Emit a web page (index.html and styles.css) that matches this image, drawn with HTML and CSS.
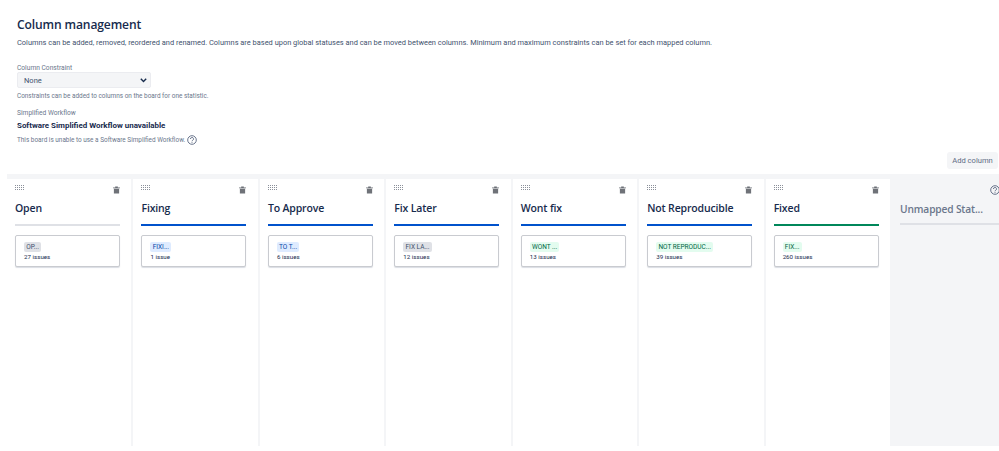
FILE: index.html
```html
<!DOCTYPE html>
<html lang="en">
<head>
<meta charset="utf-8">
<title>Column management</title>
<link rel="stylesheet" href="styles.css">
</head>
<body>
<svg class="defs" width="0" height="0" aria-hidden="true">
  <symbol id="grip" viewBox="0 0 10 6">
    <g fill="#8a8f99">
      <rect x="0" y="0" width="1" height="1"/><rect x="2" y="0" width="1" height="1"/><rect x="4" y="0" width="1" height="1"/><rect x="6" y="0" width="1" height="1"/><rect x="8" y="0" width="1" height="1"/>
      <rect x="0" y="2" width="1" height="1"/><rect x="2" y="2" width="1" height="1"/><rect x="4" y="2" width="1" height="1"/><rect x="6" y="2" width="1" height="1"/><rect x="8" y="2" width="1" height="1"/>
      <rect x="0" y="4" width="1" height="1"/><rect x="2" y="4" width="1" height="1"/><rect x="4" y="4" width="1" height="1"/><rect x="6" y="4" width="1" height="1"/><rect x="8" y="4" width="1" height="1"/>
    </g>
  </symbol>
  <symbol id="trash" viewBox="0 0 8 8">
    <path d="M2.500 0h3v1H8v1H0V1h2.500z" fill="#6b6f76"/>
    <path d="M1 2.500h6V8H1z" fill="#6f7278"/>
  </symbol>
  <symbol id="help" viewBox="0 0 10 10">
    <circle cx="5" cy="5" r="4.300" fill="none" stroke="#42526e" stroke-width=".8"/>
    <path d="M3.500 4a1.500 1.500 0 1 1 2.300 1.200c-.6.4-.8.600-.8 1.100" fill="none" stroke="#42526e" stroke-width=".8"/>
    <rect x="4.600" y="7" width=".8" height=".8" fill="#42526e"/>
  </symbol>
</svg>

<main class="page">
  <header class="intro">
    <h1 class="title">Column management</h1>
    <p class="desc">Columns can be added, removed, reordered and renamed. Columns are based upon global statuses and can be moved between columns. Minimum and maximum constraints can be set for each mapped column.</p>

    <label class="label" for="constraint">Column Constraint</label>
    <select class="select" id="constraint"><option>None</option></select>
    <p class="hint hint-one">Constraints can be added to columns on the board for one statistic.</p>

    <div class="label label-two">Simplified Workflow</div>
    <div class="strong">Software Simplified Workflow unavailable</div>
    <p class="hint hint-two">This board is unable to use a Software Simplified Workflow. <svg class="help"><use href="#help"/></svg></p>
  </header>

  <div class="actions"><button class="add" type="button">Add column</button></div>

  <section class="board">
    <article class="col">
      <div class="col-top"><svg class="grip"><use href="#grip"/></svg><svg class="trash"><use href="#trash"/></svg></div>
      <h2 class="col-name">Open</h2>
      <div class="rule rule-grey"></div>
      <div class="card"><span class="lozenge lz-grey">OP...</span><span class="count">27 issues</span></div>
    </article>
    <article class="col">
      <div class="col-top"><svg class="grip"><use href="#grip"/></svg><svg class="trash"><use href="#trash"/></svg></div>
      <h2 class="col-name">Fixing</h2>
      <div class="rule rule-blue"></div>
      <div class="card"><span class="lozenge lz-blue">FIXI...</span><span class="count">1 issue</span></div>
    </article>
    <article class="col">
      <div class="col-top"><svg class="grip"><use href="#grip"/></svg><svg class="trash"><use href="#trash"/></svg></div>
      <h2 class="col-name">To Approve</h2>
      <div class="rule rule-blue"></div>
      <div class="card"><span class="lozenge lz-blue">TO T...</span><span class="count">6 issues</span></div>
    </article>
    <article class="col">
      <div class="col-top"><svg class="grip"><use href="#grip"/></svg><svg class="trash"><use href="#trash"/></svg></div>
      <h2 class="col-name">Fix Later</h2>
      <div class="rule rule-blue"></div>
      <div class="card"><span class="lozenge lz-grey">FIX LA...</span><span class="count">12 issues</span></div>
    </article>
    <article class="col">
      <div class="col-top"><svg class="grip"><use href="#grip"/></svg><svg class="trash"><use href="#trash"/></svg></div>
      <h2 class="col-name">Wont fix</h2>
      <div class="rule rule-blue"></div>
      <div class="card"><span class="lozenge lz-green">WONT ...</span><span class="count">13 issues</span></div>
    </article>
    <article class="col">
      <div class="col-top"><svg class="grip"><use href="#grip"/></svg><svg class="trash"><use href="#trash"/></svg></div>
      <h2 class="col-name">Not Reproducible</h2>
      <div class="rule rule-blue"></div>
      <div class="card"><span class="lozenge lz-green">NOT REPRODUC...</span><span class="count">39 issues</span></div>
    </article>
    <article class="col">
      <div class="col-top"><svg class="grip"><use href="#grip"/></svg><svg class="trash"><use href="#trash"/></svg></div>
      <h2 class="col-name">Fixed</h2>
      <div class="rule rule-green"></div>
      <div class="card"><span class="lozenge lz-green">FIX...</span><span class="count">260 issues</span></div>
    </article>
    <aside class="unmapped">
      <div class="un-top"><svg class="help help-un"><use href="#help"/></svg></div>
      <h2 class="un-name">Unmapped Stat...</h2>
      <div class="rule rule-grey"></div>
    </aside>
  </section>
</main>
</body>
</html>
```

FILE: styles.css
```css
* { box-sizing: border-box; }
html, body { margin: 0; padding: 0; background: #fff; }
body {
  width: 999px;
  height: 451px;
  overflow: hidden;
  font-family: Roboto, "Open Sans", "Liberation Sans", sans-serif;
  color: #172b4d;
}
.defs { position: absolute; }
.page { display: flex; flex-direction: column; height: 446px; }
.intro { display: flex; flex-direction: column; align-items: flex-start; padding: 16px 0 0 17px; }
p, h1, h2 { margin: 0; }
.title { font-family: "Open Sans", Roboto, sans-serif; font-size: 12.100px; letter-spacing: -.13px; line-height: 17px; font-weight: 600; color: #172b4d; }
.desc { margin-top: 5px; font-size: 7.450px; line-height: 10px; color: #42526e; white-space: nowrap; }
.label { margin-top: 16px; font-size: 6.650px; line-height: 8px; color: #6b778c; }
.select {
  margin-top: 0;
  width: 134px;
  height: 16px;
  padding: 0 0 0 6px;
  border: 1px solid #ebecf0;
  border-radius: 2px;
  background: #f4f5f7 url("data:image/svg+xml,%3Csvg xmlns='http://www.w3.org/2000/svg' width='7' height='5'%3E%3Cpath d='M.8.8 3.500 3.500 6.200.8' fill='none' stroke='%23172b4d' stroke-width='1.400'/%3E%3C/svg%3E") no-repeat right 3px center;
  appearance: none;
  font-family: inherit;
  font-size: 7.500px;
  color: #42526e;
}
.hint { font-size: 6.420px; line-height: 8px; color: #6b778c; white-space: nowrap; }
.hint-one { margin-top: 4px; }
.label-two { margin-top: 9px; }
.strong { margin-top: 4px; font-size: 7.950px; line-height: 9px; font-weight: 700; color: #172b4d; }
.hint-two { margin-top: 5px; display: flex; align-items: center; gap: 2px; }
.help { width: 10px; height: 10px; }
.actions { display: flex; justify-content: flex-end; padding: 0 1px 0 0; margin-top: 7px; }
.add {
  width: 51px;
  height: 17px;
  padding: 0;
  border: 0;
  border-radius: 3px;
  background: #f4f5f7;
  font-family: inherit;
  font-size: 7.600px;
  color: #5e6c84;
}
.board {
  flex: 1;
  min-height: 0;
  margin-top: 5px;
  margin-left: 7px;
  padding-top: 5px;
  display: flex;
  column-gap: 2px;
  background: #f4f5f7;
  overflow: hidden;
}
.col {
  flex: 0 0 124.450px;
  padding: 6px 11.450px 0 8px;
  background: #fff;
}
.col-top { display: flex; justify-content: space-between; align-items: flex-start; height: 8px; }
.grip { width: 10px; height: 6px; }
.trash { width: 7px; height: 8px; margin-top: 1px; }
.col-name { margin-top: 8px; font-family: "Open Sans", Roboto, sans-serif; font-size: 10.500px; letter-spacing: -.15px; line-height: 15px; font-weight: 600; color: #172b4d; white-space: nowrap; }
.rule { height: 2px; margin-top: 8px; }
.rule-grey { background: #dfe1e6; }
.rule-blue { background: #0052cc; }
.rule-green { background: #00875a; }
.card {
  margin-top: 9px;
  height: 32px;
  padding: 6px 8px 0;
  display: flex;
  flex-direction: column;
  align-items: flex-start;
  border: 1px solid #c9cbd0;
  border-radius: 2px;
  background: #fff;
  box-shadow: 0 1px 1px rgba(9, 30, 66, .15);
}
.lozenge {
  height: 10px;
  padding: 0 2.200px;
  border-radius: 2px;
  font-size: 6.500px;
  line-height: 10px;
  font-weight: 400;
  white-space: nowrap;
}
.lz-grey { background: #dfe1e6; color: #42526e; }
.lz-blue { background: #deebff; color: #0747a6; }
.lz-green { background: #e3fcef; color: #006644; }
.count { margin-top: 1px; font-size: 6.200px; line-height: 9px; color: #172b4d; white-space: nowrap; }
.unmapped { flex: 1 0 109px; margin-left: -2px; padding: 6px 0 0 10px; background: #f4f5f7; }
.un-top { display: flex; justify-content: flex-end; height: 10px; margin-right: -1px; }
.help-un { width: 10px; height: 10px; }
.un-name { margin-top: 7px; font-family: "Open Sans", Roboto, sans-serif; font-size: 10.200px; letter-spacing: -.15px; line-height: 15px; font-weight: 600; color: #6b778c; white-space: nowrap; }
.unmapped .rule { margin-top: 6px; }
```
